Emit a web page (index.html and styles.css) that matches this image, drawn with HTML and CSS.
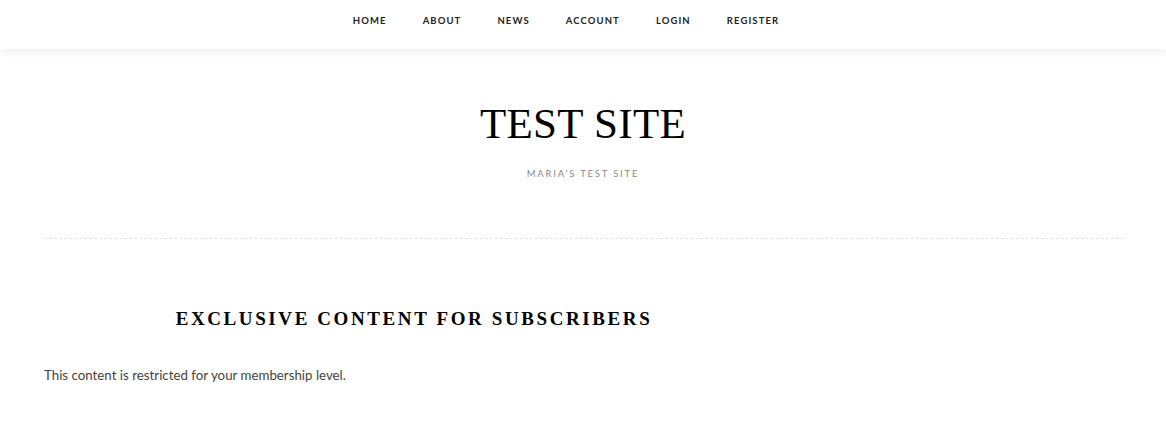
FILE: index.html
```html
<!DOCTYPE html>
<html>
<head>
<meta charset="utf-8">
<link rel="stylesheet" href="styles.css">
</head>
<body>
<header class="topbar">
  <nav class="nav">
    <a href="#">Home</a>
    <a href="#">About</a>
    <a href="#">News</a>
    <a href="#">Account</a>
    <a href="#">Login</a>
    <a href="#">Register</a>
  </nav>
</header>
<div class="branding">
  <h1 class="site-title">Test Site</h1>
  <p class="tagline">Maria's Test Site</p>
</div>
<div class="wrap">
  <hr class="divider">
  <main class="content">
    <h2 class="entry-title">Exclusive Content for Subscribers</h2>
    <p class="entry-text">This content is restricted for your membership level.</p>
  </main>
</div>
</body>
</html>
```
FILE: styles.css
```css
html, body {
  margin: 0;
  padding: 0;
  background: #fff;
}
body {
  font-family: Lato, "Noto Sans", sans-serif;
  color: #444;
}
.topbar {
  height: 49px;
  background: #fff;
  box-shadow: 0 2px 10px rgba(0,0,0,0.08);
  display: flex;
  justify-content: center;
  align-items: center;
  position: relative;
  z-index: 2;
}
.nav {
  display: flex;
  gap: 36px;
  padding-right: 34px;
  margin-top: -9px;
}
.nav a {
  font-size: 9.5px;
  font-weight: 700;
  letter-spacing: 1.1px;
  text-transform: uppercase;
  color: #222;
  text-decoration: none;
}
.branding {
  text-align: center;
  padding-top: 47px;
}
.site-title {
  margin: 0;
  font-family: "Liberation Serif", serif;
  font-weight: 400;
  font-size: 43px;
  line-height: 56px;
  letter-spacing: 0.3px;
  text-transform: uppercase;
  color: #000;
}
.tagline {
  margin: 16px 0 0;
  font-size: 9.5px;
  letter-spacing: 1.8px;
  text-transform: uppercase;
  color: #8a8a8a;
}
.wrap {
  padding: 0 42px 0 44px;
}
.divider {
  margin: 59px 0 0;
  border: 0;
  border-top: 1px dashed #e3e3e3;
}
.content {
  width: 740px;
}
.entry-title {
  margin: 66px 0 0;
  text-align: center;
  font-family: "Liberation Serif", serif;
  font-weight: 700;
  font-size: 19px;
  line-height: 28px;
  letter-spacing: 2.6px;
  text-transform: uppercase;
  color: #000;
}
.entry-text {
  margin: 30px 0 0;
  font-size: 13.3px;
  line-height: 24px;
  color: #444;
}
```
